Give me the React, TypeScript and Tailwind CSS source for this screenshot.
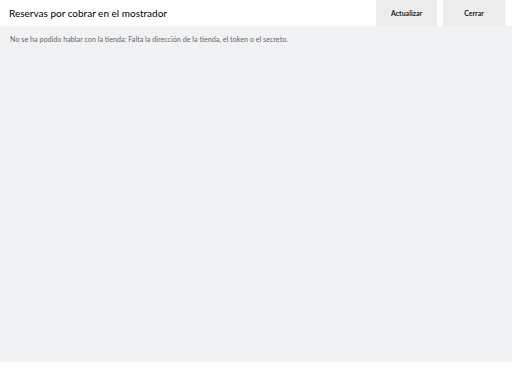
export default function App() {
  return (
    <div className="w-[512px] h-[362px] flex flex-col bg-[#f1f2f4] font-['Lato',sans-serif]">
      <header className="h-[26px] bg-white flex items-stretch">
        <h1 className="flex-1 pl-[9px] flex items-center text-[10px] text-black font-normal">
          Reservas por cobrar en el mostrador
        </h1>
        <div className="flex gap-[6px] pr-[7px]">
          <button className="w-[61px] bg-[#ececec] text-[7px] font-bold text-[#222]">Actualizar</button>
          <button className="w-[62px] bg-[#ececec] text-[7px] font-bold text-[#222]">Cerrar</button>
        </div>
      </header>
      <main className="flex-1 px-[10px] pt-[9px]">
        <p className="text-[7.2px] text-[#666]">
          No se ha podido hablar con la tienda: Falta la dirección de la tienda, el token o el secreto.
        </p>
      </main>
    </div>
  );
}
